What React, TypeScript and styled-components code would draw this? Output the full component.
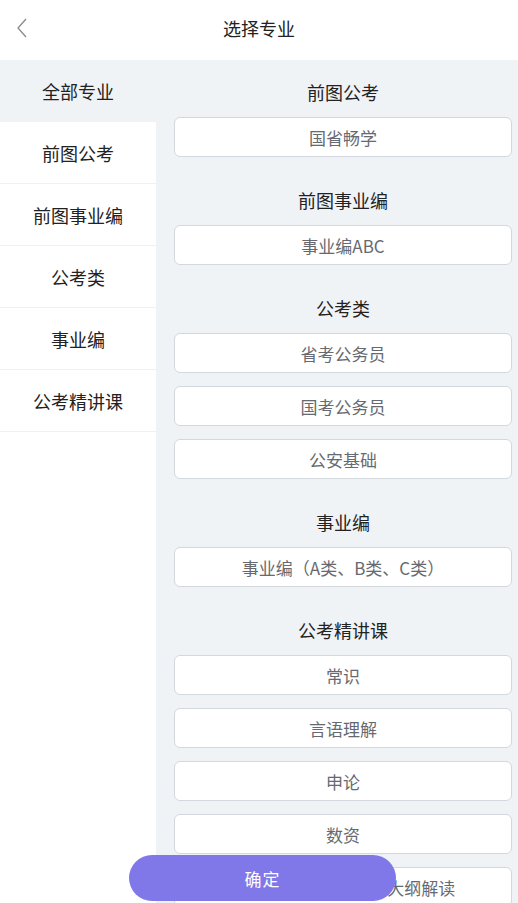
import React from "react";
import styled, { createGlobalStyle } from "styled-components";

const Global = createGlobalStyle`
  html, body { margin: 0; padding: 0; background: #ffffff; }
  body { font-family: "Noto Sans CJK SC", "Noto Sans", sans-serif; }
  * { box-sizing: border-box; }
`;

const Page = styled.div`
  position: relative;
  width: 100%;
  height: 100vh;
  display: flex;
  flex-direction: column;
  overflow: hidden;
  background: #ffffff;
`;

const Header = styled.header`
  height: 60px;
  flex: 0 0 60px;
  display: flex;
  align-items: center;
  justify-content: center;
  padding-bottom: 4px;
  position: relative;
  background: #ffffff;
`;

const Back = styled.button`
  position: absolute;
  left: 10px;
  top: 14px;
  width: 24px;
  height: 28px;
  border: 0;
  padding: 0;
  background: transparent;
  display: flex;
  align-items: center;
  justify-content: center;
`;

const Title = styled.h1`
  margin: 0;
  font-size: 18px;
  font-weight: 400;
  color: #222222;
  line-height: 24px;
`;

const Body = styled.div`
  flex: 1;
  display: flex;
  min-height: 0;
`;

const Sidebar = styled.nav`
  width: 156px;
  flex: 0 0 156px;
  display: flex;
  flex-direction: column;
  background: #ffffff;
`;

const SideItem = styled.div<{ $active?: boolean }>`
  height: 62px;
  display: flex;
  align-items: center;
  justify-content: center;
  font-size: 18px;
  color: #222222;
  background: ${(p) => (p.$active ? "#f0f3f6" : "#ffffff")};
  border-bottom: 1px solid ${(p) => (p.$active ? "#f0f3f6" : "#eef0f2")};
`;

const Content = styled.main`
  flex: 1;
  background: #f0f3f6;
  padding: 14px 6px 0 18px;
  display: flex;
  flex-direction: column;
  gap: 25px;
  overflow: hidden;
`;

const Section = styled.section`
  display: flex;
  flex-direction: column;
`;

const SectionTitle = styled.div`
  height: 36px;
  margin-bottom: 7px;
  display: flex;
  align-items: center;
  justify-content: center;
  font-size: 18px;
  color: #222222;
`;

const Options = styled.div`
  display: flex;
  flex-direction: column;
  gap: 13px;
`;

const Option = styled.div`
  height: 40px;
  flex: 0 0 40px;
  border: 1px solid #d3d8de;
  border-radius: 6px;
  background: #ffffff;
  display: flex;
  align-items: center;
  justify-content: center;
  font-size: 17px;
  color: #666a70;
  white-space: nowrap;
`;

const Confirm = styled.button`
  position: absolute;
  left: 129px;
  bottom: 2px;
  width: 267px;
  height: 46px;
  border: 0;
  border-radius: 23px;
  background: #8078e8;
  color: #ffffff;
  font-family: "Noto Sans CJK SC", "Noto Sans", sans-serif;
  font-size: 17px;
  letter-spacing: 1px;
  padding: 0;
`;

const sections = [
  { title: "前图公考", items: ["国省畅学"] },
  { title: "前图事业编", items: ["事业编ABC"] },
  { title: "公考类", items: ["省考公务员", "国考公务员", "公安基础"] },
  { title: "事业编", items: ["事业编（A类、B类、C类）"] },
  {
    title: "公考精讲课",
    items: ["常识", "言语理解", "申论", "数资", "2024年国考申论考试大纲解读"],
  },
];

const side = ["前图公考", "前图事业编", "公考类", "事业编", "公考精讲课"];

export default function App() {
  return (
    <Page>
      <Global />
      <Header>
        <Back aria-label="返回">
          <svg width="14" height="22" viewBox="0 0 14 22">
            <polyline
              points="11,2 3,11 11,20"
              fill="none"
              stroke="#8a8a8a"
              strokeWidth="1.3"
            />
          </svg>
        </Back>
        <Title>选择专业</Title>
      </Header>
      <Body>
        <Sidebar>
          <SideItem $active>全部专业</SideItem>
          {side.map((s) => (
            <SideItem key={s}>{s}</SideItem>
          ))}
        </Sidebar>
        <Content>
          {sections.map((sec) => (
            <Section key={sec.title}>
              <SectionTitle>{sec.title}</SectionTitle>
              <Options>
                {sec.items.map((it) => (
                  <Option key={it}>{it}</Option>
                ))}
              </Options>
            </Section>
          ))}
        </Content>
      </Body>
      <Confirm>确定</Confirm>
    </Page>
  );
}
